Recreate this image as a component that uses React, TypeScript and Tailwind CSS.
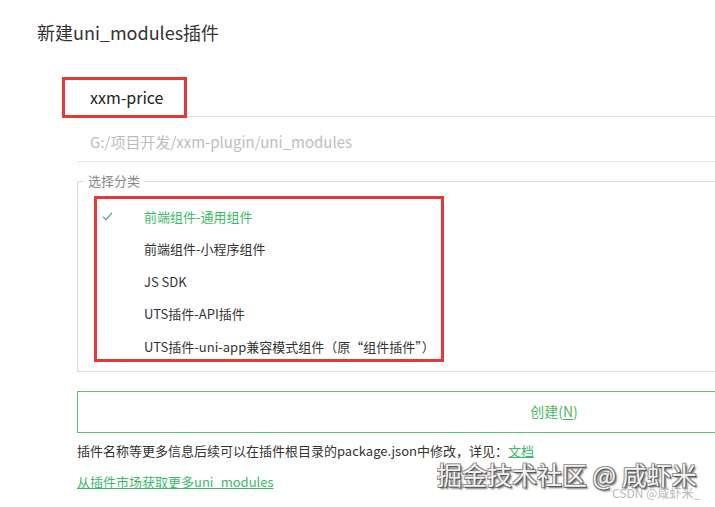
import React from 'react';

const categories = [
  '前端组件-通用组件',
  '前端组件-小程序组件',
  'JS SDK',
  'UTS插件-API插件',
  'UTS插件-uni-app兼容模式组件（原“组件插件”）',
];

function CheckMark() {
  return (
    <svg width="11" height="9" viewBox="0 0 11 9" fill="none" aria-hidden="true">
      <path d="M1 4.8 L4 7.6 L10 1" stroke="#5f9e7c" strokeWidth="1.2" />
    </svg>
  );
}

export default function App() {
  const selected = 0;

  return (
    <div
      className="relative w-[715px] h-[507px] overflow-hidden bg-white text-[#333]"
      style={{ fontFamily: '"Noto Sans CJK SC", "Noto Sans", sans-serif' }}
    >
      <div className="w-[1000px] pl-[37px]">
        <h1 className="pt-[19px] text-[18px] leading-[26px] text-[#333]">新建uni_modules插件</h1>

        <div className="ml-[40px] mt-[27px] w-[954px]">
          <div className="h-[45px] border-b border-[#e3e3e3] pl-[13px] flex items-center pt-[6px] text-[16px] text-[#222]">
            xxm-price
          </div>
          <div className="h-[45px] border-b border-[#e3e3e3] pl-[13px] flex items-center pt-[7px] text-[15px] text-[#bdbdbd]">
            G:/项目开发/xxm-plugin/uni_modules
          </div>

          <fieldset className="mt-[10px] border border-[#dcdcdc] pl-[6px] pt-[10px] pb-[8px]">
            <legend className="px-[4px] text-[13px] leading-[18px] text-[#888]">选择分类</legend>
            <ul>
              {categories.map((c, i) => (
                <li key={c} className="h-[32.5px] flex items-center text-[13px]">
                  <span className="w-[60px] flex items-center pl-[18px]">
                    {i === selected && <CheckMark />}
                  </span>
                  <span className={i === selected ? 'text-[#3db86a]' : 'text-[#333]'}>{c}</span>
                </li>
              ))}
            </ul>
          </fieldset>

          <button className="mt-[19px] w-[954px] h-[42px] border border-[#5cbf72] text-[14px] text-[#4cb865] flex items-center justify-center">
            创建(<span className="underline underline-offset-2">N</span>)
          </button>

          <p className="mt-[9px] text-[13px] leading-[18px] text-[#333]">
            插件名称等更多信息后续可以在插件根目录的package.json中修改，详见：
            <a className="text-[#3db86a] underline">文档</a>
          </p>
          <p className="mt-[13px] text-[13px] leading-[18px]">
            <a className="text-[#3db86a] underline">从插件市场获取更多uni_modules</a>
          </p>
        </div>
      </div>

      {/* annotation boxes */}
      <div className="absolute left-[62px] top-[77px] w-[125px] h-[41px] border-[3px] border-[#e53935]" />
      <div className="absolute left-[94px] top-[196px] w-[350px] h-[166px] border-[3px] border-[#e53935]" />

      {/* watermark */}
      <div
        className="absolute left-[437px] top-[459px] text-[25px] leading-[30px] text-[#f4f4f4]"
        style={{ textShadow: '1px 1px 0 #555, -1px -1px 0 #999, 1px -1px 0 #888, -1px 1px 0 #888, 2px 2px 2px #666' }}
      >
        掘金技术社区 @ 咸虾米
      </div>
      <div className="absolute left-[612px] top-[486px] text-[12px] leading-[14px] text-[#b9b9b9]">CSDN @咸虾米_</div>
    </div>
  );
}
